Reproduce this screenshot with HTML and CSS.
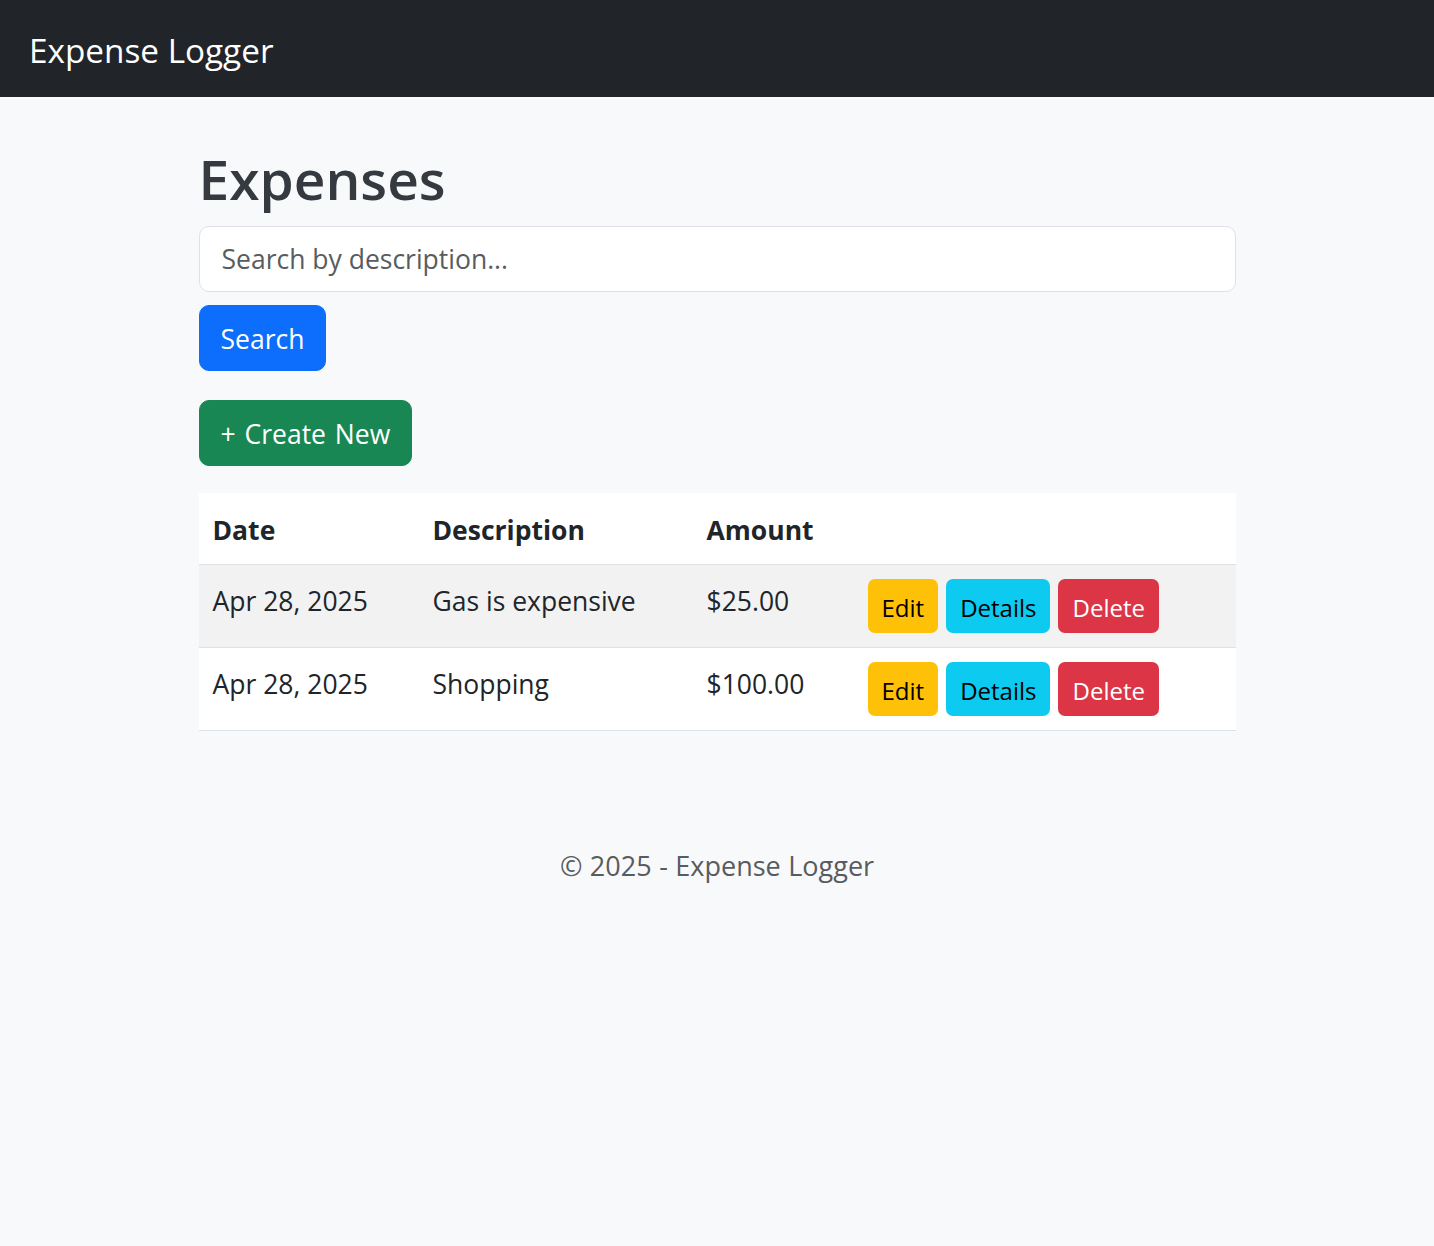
FILE: index.html
```html
<!DOCTYPE html>
<html lang="en">
<head>
<meta charset="utf-8">
<title>Expense Logger</title>
<link rel="stylesheet" href="styles.css">
</head>
<body>
<nav class="navbar">
  <a class="brand" href="#">Expense Logger</a>
</nav>
<main class="container">
  <h1 class="title">Expenses</h1>
  <form class="search-form">
    <input class="search-input" type="text" placeholder="Search by description...">
    <button class="btn btn-primary" type="button">Search</button>
  </form>
  <a class="btn btn-success create" href="#">+ Create New</a>
  <table class="table">
    <thead>
      <tr>
        <th class="col-date">Date</th>
        <th class="col-desc">Description</th>
        <th class="col-amount">Amount</th>
        <th class="col-actions"></th>
      </tr>
    </thead>
    <tbody>
      <tr class="striped">
        <td>Apr 28, 2025</td>
        <td>Gas is expensive</td>
        <td>$25.00</td>
        <td>
          <div class="actions">
            <a class="btn-sm btn-warning" href="#">Edit</a>
            <a class="btn-sm btn-info" href="#">Details</a>
            <a class="btn-sm btn-danger" href="#">Delete</a>
          </div>
        </td>
      </tr>
      <tr>
        <td>Apr 28, 2025</td>
        <td>Shopping</td>
        <td>$100.00</td>
        <td>
          <div class="actions">
            <a class="btn-sm btn-warning" href="#">Edit</a>
            <a class="btn-sm btn-info" href="#">Details</a>
            <a class="btn-sm btn-danger" href="#">Delete</a>
          </div>
        </td>
      </tr>
    </tbody>
  </table>
</main>
<footer class="footer">© 2025 - Expense Logger</footer>
</body>
</html>
```

FILE: styles.css
```css
* { box-sizing: border-box; }

html, body {
  margin: 0;
  padding: 0;
}

body {
  background: #f8f9fa;
  font-family: "Open Sans", "Noto Sans", "Liberation Sans", sans-serif;
  font-size: 26.5px;
  line-height: 42px;
  color: #212529;
}

.navbar {
  height: 97px;
  background: #212529;
  display: flex;
  align-items: center;
  padding-left: 29px;
}

.brand {
  color: #ffffff;
  text-decoration: none;
  font-size: 33.3px;
  line-height: 48px;
  padding-top: 2px;
}

.container {
  width: 1037px;
  margin: 0 auto;
  padding-top: 46px;
}

.title {
  margin: 0 0 11px;
  font-size: 55px;
  line-height: 72px;
  font-weight: 600;
  color: #343a40;
}

.search-form {
  display: flex;
  flex-direction: column;
  align-items: flex-start;
  gap: 13px;
}

.search-input {
  width: 100%;
  height: 66px;
  padding: 0 21px 0 22px;
  border: 1px solid #dee2e6;
  border-radius: 10px;
  background: #fff;
  font: inherit;
  color: #212529;
}

.search-input::placeholder {
  color: #595c5f;
  opacity: 1;
}

.btn {
  display: inline-flex;
  align-items: center;
  height: 66px;
  padding: 2px 21px 0;
  border: 1px solid transparent;
  border-radius: 10px;
  font: inherit;
  color: #fff;
  text-decoration: none;
  cursor: pointer;
}

.btn-primary {
  background: #0d6efd;
  border-color: #0d6efd;
}

.btn-success {
  background: #198754;
  border-color: #198754;
  word-spacing: 2px;
}

.create {
  margin-top: 29px;
}

.table {
  margin-top: 27px;
  width: 100%;
  border-collapse: collapse;
  background: #fff;
}

.table th,
.table td {
  padding: 14px;
  border-bottom: 1px solid #dee2e6;
  text-align: left;
  vertical-align: top;
  line-height: 42px;
}

.table th {
  font-weight: 700;
  padding-top: 16px;
  padding-bottom: 13px;
}

.table td {
  padding-top: 15px;
  padding-bottom: 14px;
}

.col-date { width: 220px; }
.col-desc { width: 274px; }
.col-amount { width: 161px; }

.striped td {
  background: #f2f2f2;
}

.actions {
  display: flex;
  gap: 8px;
  margin-top: -1px;
}

.btn-sm {
  display: inline-flex;
  align-items: center;
  height: 54px;
  padding: 4px 14px 0;
  border-radius: 7px;
  font-size: 24px;
  text-decoration: none;
}

.btn-warning { background: #ffc107; color: #000; }
.btn-info { background: #0dcaf0; color: #000; }
.btn-danger { background: #dc3545; color: #fff; }

.footer {
  margin-top: 114px;
  text-align: center;
  color: #595c5f;
  font-size: 27px;
  word-spacing: 0.5px;
}
```
